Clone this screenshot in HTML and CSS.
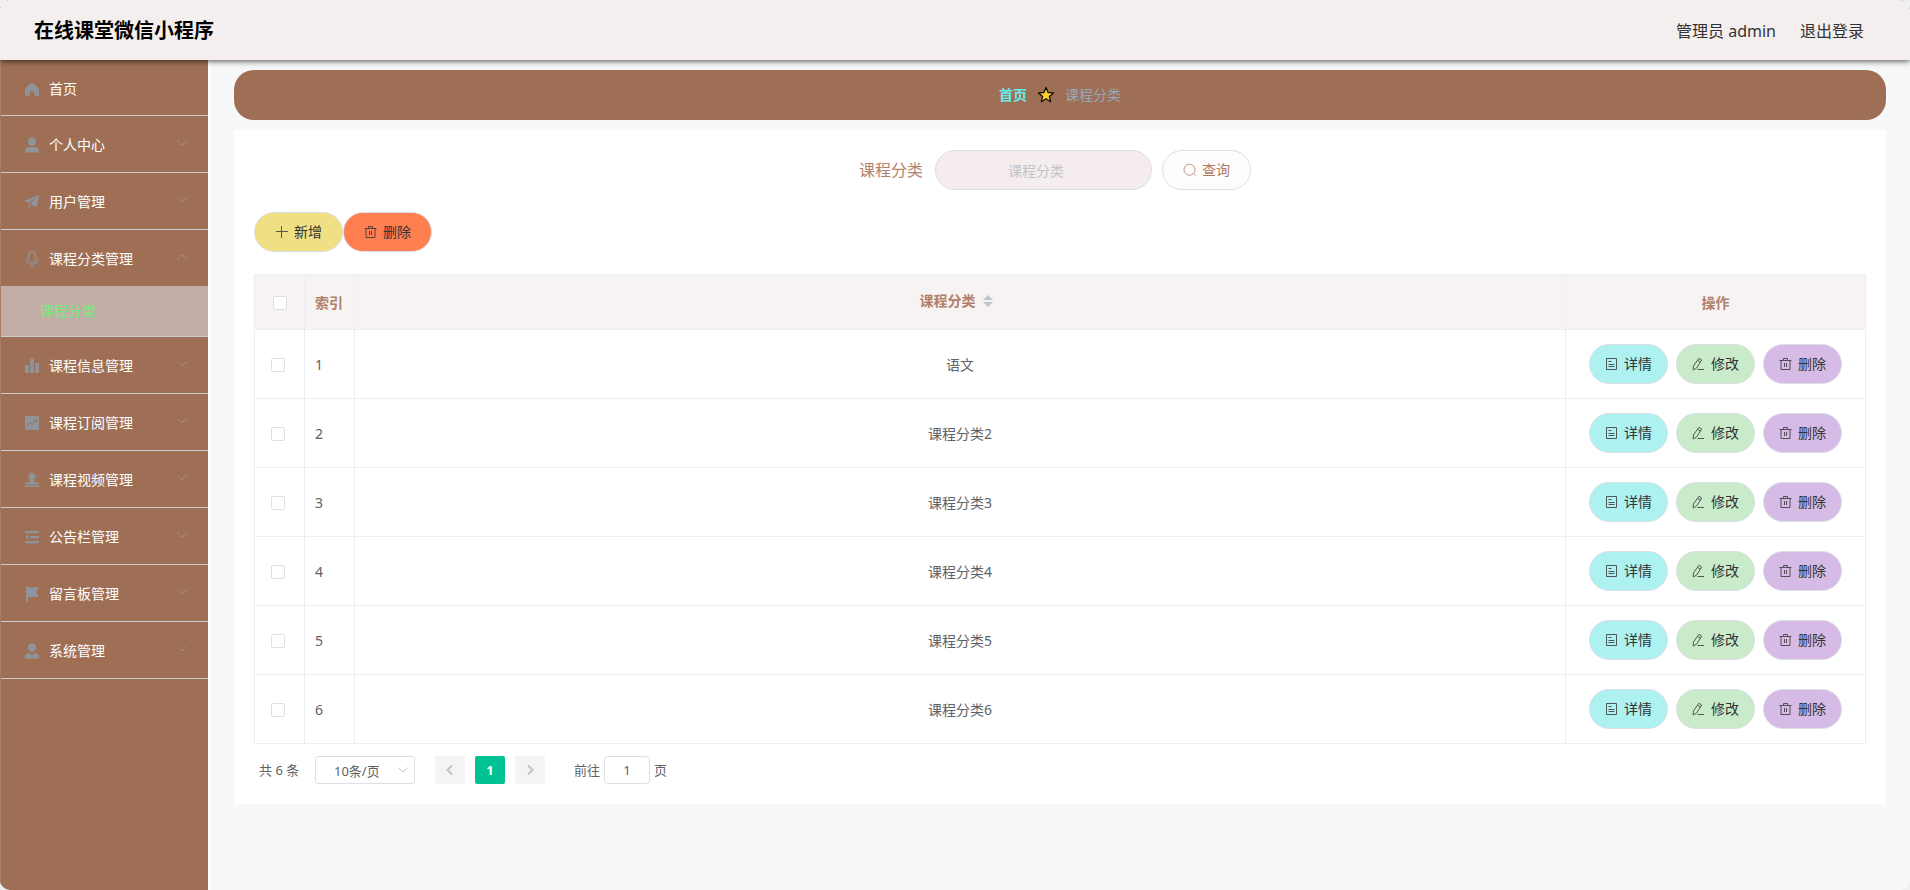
FILE: index.html
```html
<!DOCTYPE html>
<html lang="zh-CN">
<head>
<meta charset="utf-8">
<title>在线课堂微信小程序</title>
<link rel="stylesheet" href="styles.css">
</head>
<body>
<svg class="sprite" aria-hidden="true">
  <symbol id="i-home" viewBox="0 0 16 16"><path fill="currentColor" d="M8 1.500 1 7.500V15h4.600v-4.500h4.800V15H15V7.500z"/></symbol>
  <symbol id="i-user" viewBox="0 0 16 16"><circle fill="currentColor" cx="8" cy="4.600" r="4.100"/><path fill="currentColor" d="M1 15.500v-2.300C1 11.200 2.300 10 4.200 10h7.600c1.900 0 3.200 1.200 3.200 3.200v2.300z"/></symbol>
  <symbol id="i-plane" viewBox="0 0 16 16"><path fill="currentColor" d="M15 1 .5 6.800 4.300 9 12 3.800 6 10l6.800 3.300zM4.300 10.200v4.900l2.600-3.600z"/></symbol>
  <symbol id="i-mic" viewBox="0 0 16 16"><g fill="none" stroke="currentColor" stroke-width="1.200"><rect x="4.700" y=".8" width="6.600" height="10.400" rx="3.300"/><path d="M2.400 7.500v1.200a5.600 4.500 0 0 0 11.200 0V7.500M8 13.200v2.300M5.500 15.500h5"/></g></symbol>
  <symbol id="i-bars" viewBox="0 0 16 16"><path fill="currentColor" d="M1 7h3.800v8H1zM6.100 1h3.800v14H6.100zM11.200 5H15v10h-3.800z"/></symbol>
  <symbol id="i-trend" viewBox="0 0 16 16"><path fill="currentColor" d="M1 1h14v14H1z"/><path fill="none" stroke="#9e6f55" stroke-width="1" d="m3.200 11 3-3.200L8.500 9.500 12.300 5M10.300 5h2.400v2"/></symbol>
  <symbol id="i-stamp" viewBox="0 0 16 16"><path fill="currentColor" d="M8 1a3.600 3.600 0 0 0-3.400 4.700C5 6.700 6.300 7.200 6.300 8.500 6.300 10 5.700 10 4 10.200c-2 .2-3 .8-3 2.300h14c0-1.500-1-2.100-3-2.300-1.700-.2-2.300-.2-2.300-1.700 0-1.300 1.300-1.800 1.700-2.800A3.600 3.600 0 0 0 8 1zM1 13.600h14V15H1z"/></symbol>
  <symbol id="i-fold" viewBox="0 0 16 16"><path fill="currentColor" d="M1 2h14v2.200H1zM6 7h9v2.200H6zM1 12h14v2.200H1zM1 8.100l3.600-2.500v5z"/></symbol>
  <symbol id="i-flag" viewBox="0 0 16 16"><path fill="currentColor" d="M2 .2h2v15.600H2zM4 1.200h11L12.200 6l2.800 5H4z"/></symbol>
  <symbol id="i-admin" viewBox="0 0 16 16"><circle fill="currentColor" cx="8" cy="4.600" r="4.100"/><path fill="currentColor" d="M.5 15.500c.2-3.800 1.800-5.300 4.700-5.800L8 12.500l2.800-2.800c2.900.5 4.500 2 4.700 5.800z"/></symbol>
  <symbol id="i-down" viewBox="0 0 12 12"><path fill="none" stroke="currentColor" d="M1.500 3.500 6 8l4.500-4.500"/></symbol>
  <symbol id="i-up" viewBox="0 0 12 12"><path fill="none" stroke="currentColor" d="M1.500 8.500 6 4l4.500 4.500"/></symbol>
  <symbol id="i-star" viewBox="0 0 18 18"><path fill="#fc3" stroke="#1a1208" stroke-width="1.300" stroke-linejoin="round" d="m9 1.500 2.100 5 5.400.4-4.100 3.500 1.300 5.300L9 12.800l-4.700 2.900 1.300-5.300L1.500 6.900l5.400-.4z"/></symbol>
  <symbol id="i-search" viewBox="0 0 14 14"><g fill="none" stroke="currentColor"><circle cx="6.500" cy="6.700" r="5.500"/><path d="m10.500 10.500 2 2"/></g></symbol>
  <symbol id="i-plus" viewBox="0 0 14 14"><path fill="none" stroke="currentColor" d="M1 6.500h12M6.500 1v12"/></symbol>
  <symbol id="i-trash" viewBox="0 0 14 14"><path fill="none" stroke="currentColor" d="M.5 3.500h12M4.500 3.500v-2h4v2M2 3.500v9h9v-9M5.500 6v4M7.500 6v4"/></symbol>
  <symbol id="i-doc" viewBox="0 0 14 14"><path fill="none" stroke="currentColor" d="M1.500 1.500h10v11h-10zM3.500 4.500h3M3.500 7.500h6M3.500 9.500h6"/></symbol>
  <symbol id="i-edit" viewBox="0 0 14 14"><path fill="none" stroke="currentColor" d="M6.900 1.300 9.700 3 4.500 11.200 1.200 13l.2-3.900zM5.600 3.400l2.800 1.700M5.500 12.500H12"/></symbol>
</svg>

<div class="app">
  <header class="header">
    <h1 class="header-title">在线课堂微信小程序</h1>
    <div class="header-user"><span>管理员 admin</span><a href="#logout">退出登录</a></div>
  </header>
  <div class="body">
    <nav class="sidebar">
      <a class="menu-item menu-home" href="#home"><svg class="menu-icon"><use href="#i-home"/></svg><span>首页</span></a>
      <button class="menu-item" type="button"><svg class="menu-icon"><use href="#i-user"/></svg><span>个人中心</span><svg class="menu-arrow"><use href="#i-down"/></svg></button>
      <button class="menu-item" type="button"><svg class="menu-icon"><use href="#i-plane"/></svg><span>用户管理</span><svg class="menu-arrow"><use href="#i-down"/></svg></button>
      <button class="menu-item menu-open" type="button" aria-expanded="true"><svg class="menu-icon"><use href="#i-mic"/></svg><span>课程分类管理</span><svg class="menu-arrow"><use href="#i-up"/></svg></button>
      <a class="submenu-item" href="#category">课程分类</a>
      <button class="menu-item" type="button"><svg class="menu-icon"><use href="#i-bars"/></svg><span>课程信息管理</span><svg class="menu-arrow"><use href="#i-down"/></svg></button>
      <button class="menu-item" type="button"><svg class="menu-icon"><use href="#i-trend"/></svg><span>课程订阅管理</span><svg class="menu-arrow"><use href="#i-down"/></svg></button>
      <button class="menu-item" type="button"><svg class="menu-icon"><use href="#i-stamp"/></svg><span>课程视频管理</span><svg class="menu-arrow"><use href="#i-down"/></svg></button>
      <button class="menu-item" type="button"><svg class="menu-icon"><use href="#i-fold"/></svg><span>公告栏管理</span><svg class="menu-arrow"><use href="#i-down"/></svg></button>
      <button class="menu-item" type="button"><svg class="menu-icon"><use href="#i-flag"/></svg><span>留言板管理</span><svg class="menu-arrow"><use href="#i-down"/></svg></button>
      <button class="menu-item" type="button"><svg class="menu-icon"><use href="#i-admin"/></svg><span>系统管理</span><svg class="menu-arrow"><use href="#i-down"/></svg></button>
    </nav>
    <main class="main">
      <div class="breadcrumb"><a href="#home">首页</a><svg class="star"><use href="#i-star"/></svg><span>课程分类</span></div>
      <section class="card">
        <form class="search">
          <label for="keyword">课程分类</label>
          <input id="keyword" class="search-input" type="text" placeholder="课程分类">
          <button class="btn btn-search" type="button"><svg class="btn-icon"><use href="#i-search"/></svg>查询</button>
        </form>
        <div class="toolbar">
          <button class="btn btn-add" type="button"><svg class="btn-icon"><use href="#i-plus"/></svg>新增</button>
          <button class="btn btn-remove" type="button"><svg class="btn-icon"><use href="#i-trash"/></svg>删除</button>
        </div>
        <table class="table">
          <colgroup><col class="col-small"><col class="col-small"><col><col class="col-actions"></colgroup>
          <thead>
            <tr><th class="cell-check"><input type="checkbox" aria-label="全选"></th><th class="cell-index">索引</th><th><span class="sortable">课程分类<span class="sort"><i class="sort-up"></i><i class="sort-down"></i></span></span></th><th>操作</th></tr>
          </thead>
          <tbody>
            <tr><td class="cell-check"><input type="checkbox" aria-label="选择 1"></td><td class="cell-index">1</td><td>语文</td><td class="cell-actions"><div class="actions"><button class="btn btn-detail" type="button"><svg class="btn-icon"><use href="#i-doc"/></svg>详情</button><button class="btn btn-edit" type="button"><svg class="btn-icon"><use href="#i-edit"/></svg>修改</button><button class="btn btn-delete" type="button"><svg class="btn-icon"><use href="#i-trash"/></svg>删除</button></div></td></tr>
            <tr><td class="cell-check"><input type="checkbox" aria-label="选择 2"></td><td class="cell-index">2</td><td>课程分类2</td><td class="cell-actions"><div class="actions"><button class="btn btn-detail" type="button"><svg class="btn-icon"><use href="#i-doc"/></svg>详情</button><button class="btn btn-edit" type="button"><svg class="btn-icon"><use href="#i-edit"/></svg>修改</button><button class="btn btn-delete" type="button"><svg class="btn-icon"><use href="#i-trash"/></svg>删除</button></div></td></tr>
            <tr><td class="cell-check"><input type="checkbox" aria-label="选择 3"></td><td class="cell-index">3</td><td>课程分类3</td><td class="cell-actions"><div class="actions"><button class="btn btn-detail" type="button"><svg class="btn-icon"><use href="#i-doc"/></svg>详情</button><button class="btn btn-edit" type="button"><svg class="btn-icon"><use href="#i-edit"/></svg>修改</button><button class="btn btn-delete" type="button"><svg class="btn-icon"><use href="#i-trash"/></svg>删除</button></div></td></tr>
            <tr><td class="cell-check"><input type="checkbox" aria-label="选择 4"></td><td class="cell-index">4</td><td>课程分类4</td><td class="cell-actions"><div class="actions"><button class="btn btn-detail" type="button"><svg class="btn-icon"><use href="#i-doc"/></svg>详情</button><button class="btn btn-edit" type="button"><svg class="btn-icon"><use href="#i-edit"/></svg>修改</button><button class="btn btn-delete" type="button"><svg class="btn-icon"><use href="#i-trash"/></svg>删除</button></div></td></tr>
            <tr><td class="cell-check"><input type="checkbox" aria-label="选择 5"></td><td class="cell-index">5</td><td>课程分类5</td><td class="cell-actions"><div class="actions"><button class="btn btn-detail" type="button"><svg class="btn-icon"><use href="#i-doc"/></svg>详情</button><button class="btn btn-edit" type="button"><svg class="btn-icon"><use href="#i-edit"/></svg>修改</button><button class="btn btn-delete" type="button"><svg class="btn-icon"><use href="#i-trash"/></svg>删除</button></div></td></tr>
            <tr><td class="cell-check"><input type="checkbox" aria-label="选择 6"></td><td class="cell-index">6</td><td>课程分类6</td><td class="cell-actions"><div class="actions"><button class="btn btn-detail" type="button"><svg class="btn-icon"><use href="#i-doc"/></svg>详情</button><button class="btn btn-edit" type="button"><svg class="btn-icon"><use href="#i-edit"/></svg>修改</button><button class="btn btn-delete" type="button"><svg class="btn-icon"><use href="#i-trash"/></svg>删除</button></div></td></tr>
          </tbody>
        </table>
        <div class="pagination">
          <span class="total">共 6 条</span>
          <span class="size"><select aria-label="每页条数"><option>10条/页</option></select><svg class="size-arrow"><use href="#i-down"/></svg></span>
          <div class="pager">
            <button type="button" disabled aria-label="上一页"><svg viewBox="0 0 12 12"><path d="M8 1.500 3.500 6 8 10.500"/></svg></button>
            <button type="button" class="current">1</button>
            <button type="button" disabled aria-label="下一页"><svg viewBox="0 0 12 12"><path d="M4 1.500 8.500 6 4 10.500"/></svg></button>
          </div>
          <label class="jump">前往<input type="text" value="1">页</label>
        </div>
      </section>
    </main>
  </div>
</div>
</body>
</html>
```

FILE: styles.css
```css
* { box-sizing: border-box; }
body {
  margin: 0;
  background: #f0f0f0;
  color: #606266;
  font: 14px/20px "Noto Sans", "Noto Sans CJK SC", sans-serif;
}
button, input, select { font: inherit; color: inherit; margin: 0; }
button { cursor: pointer; }
a { color: inherit; text-decoration: none; }
.sprite { display: none; }

.app {
  display: flex;
  flex-direction: column;
  min-height: 100vh;
  background: #f7f8fa;
  border-radius: 10px;
  overflow: hidden;
}
.header {
  position: relative;
  z-index: 1;
  display: flex;
  align-items: center;
  justify-content: space-between;
  height: 60px;
  padding: 2px 46px 0 34px;
  background: #f4eeee;
  box-shadow: 0 1px 6px rgba(0, 0, 0, .7);
}
.header-title { margin: 0; color: #000; font-size: 20px; line-height: 28px; font-weight: 700; }
.header-user { display: flex; gap: 24px; color: #333; font-size: 16px; line-height: 24px; }

.body { flex: 1; display: flex; }
.sidebar {
  flex: none;
  width: 210px;
  background: #9e6f55;
  border-left: 1px solid #a77d67;
  border-right: 2px solid #fff;
}
.menu-item {
  display: flex;
  align-items: center;
  width: 100%;
  height: 57px;
  padding: 2px 20px 0 23px;
  border: 0;
  border-bottom: 1px solid #ccc;
  background: none;
  color: #fff;
  text-align: left;
}
.menu-home { height: 56px; }
.menu-open { height: 56px; border-bottom: 0; }
.menu-icon { width: 16px; height: 16px; margin-right: 9px; color: #909399; }
.menu-arrow { width: 12px; height: 12px; margin: 0 0 4px auto; color: #a98d80; }
.submenu-item {
  display: flex;
  align-items: center;
  height: 51px;
  padding-left: 39px;
  border-bottom: 1px solid #ccc;
  background: #c2aea7;
  color: #6fef7b;
}

.main { flex: 1; min-width: 0; padding: 10px 24px; }
.breadcrumb {
  display: flex;
  align-items: center;
  justify-content: center;
  gap: 10px;
  height: 50px;
  margin-bottom: 10px;
  border-radius: 20px;
  background: #9e6f55;
  color: #97a8be;
}
.breadcrumb a { color: #66eeee; font-weight: 700; }
.star { width: 18px; height: 18px; }
.card { padding: 20px; background: #fff; }
.search {
  display: flex;
  align-items: center;
  justify-content: center;
  margin: 0 10px 22px 0;
}
.search label { margin-right: 12px; color: #b3826c; font-size: 16px; line-height: 24px; }
.search-input {
  width: 217px;
  height: 40px;
  margin-right: 10px;
  padding: 0 30px 0 15px;
  border: 1px solid #dcdfe6;
  border-radius: 20px;
  background: #f5ecee;
  text-align: center;
}
.search-input::placeholder { color: #c0c4cc; opacity: 1; }

.btn {
  display: inline-flex;
  align-items: center;
  justify-content: center;
  gap: 5px;
  height: 40px;
  width: 79px;
  padding: 0;
  border: 1px solid #dcdfe6;
  border-radius: 20px;
  color: #333;
}
.btn-icon { width: 14px; height: 14px; opacity: .8; }
.btn-search, .btn-add, .btn-remove { width: 89px; }
.btn-search { background: #fdfdfd; color: #b07a60; }
.btn-add { background: #f0e084; }
.btn-remove { background: #ff7f50; }
.btn-detail { background: #aef1f1; }
.btn-edit { background: #caebca; }
.btn-delete { background: #d5bbe6; }
.toolbar { display: flex; margin-bottom: 22px; }
.actions { display: flex; justify-content: center; gap: 8px; }

.table {
  width: 100%;
  table-layout: fixed;
  border-collapse: separate;
  border-spacing: 0;
  border-top: 1px solid #ebeef5;
  border-left: 1px solid #ebeef5;
}
.col-small { width: 50px; }
.col-actions { width: 300px; }
.table th, .table td {
  height: 69px;
  padding: 2px 0 0;
  border-right: 1px solid #ebeef5;
  border-bottom: 1px solid #ebeef5;
  text-align: center;
  vertical-align: middle;
}
.table th { height: 55px; background: #f7f3f3; color: #b0806a; font-weight: 700; }
.table .cell-index { padding-left: 10px; text-align: left; }
.table .cell-actions { padding-top: 0; }
.table td.cell-check { padding-right: 4px; }
.cell-check input {
  display: block;
  width: 14px;
  height: 14px;
  margin: 0 auto;
  appearance: none;
  border: 1px solid #dcdfe6;
  border-radius: 2px;
  background: #fff;
}
.sortable { display: inline-flex; align-items: center; gap: 7px; padding-bottom: 4px; margin-right: 8px; }
.sort { display: flex; flex-direction: column; gap: 2px; }
.sort-up, .sort-down { border: 5px solid transparent; }
.sort-up { border-top: 0; border-bottom-color: #c0c4cc; }
.sort-down { border-bottom: 0; border-top-color: #c0c4cc; }

.pagination {
  display: flex;
  align-items: center;
  padding: 12px 5px 0;
  font-size: 13px;
  line-height: 28px;
}
.total { width: 56px; }
.size { position: relative; display: flex; margin-right: 20px; }
.size select {
  width: 100px;
  height: 28px;
  padding: 0 32px 2px 18px;
  appearance: none;
  border: 1px solid #dcdfe6;
  border-radius: 3px;
  background: #fff;
}
.size-arrow { position: absolute; right: 6px; top: 8px; width: 12px; height: 12px; color: #c0c4cc; pointer-events: none; }
.pager { display: flex; gap: 10px; margin-right: 29px; }
.pager button {
  display: flex;
  align-items: center;
  justify-content: center;
  width: 30px;
  height: 28px;
  padding: 0;
  border: 0;
  border-radius: 2px;
  background: #f4f4f5;
}
.pager svg { width: 12px; height: 12px; fill: none; stroke: #c0c4cc; stroke-width: 2; }
.pager .current { background: #00c292; color: #fff; font-weight: 700; }
.jump { display: flex; gap: 4px; }
.jump input {
  width: 46px;
  height: 28px;
  padding: 0 3px;
  border: 1px solid #dcdfe6;
  border-radius: 4px;
  background: #fff;
  text-align: center;
}
```
